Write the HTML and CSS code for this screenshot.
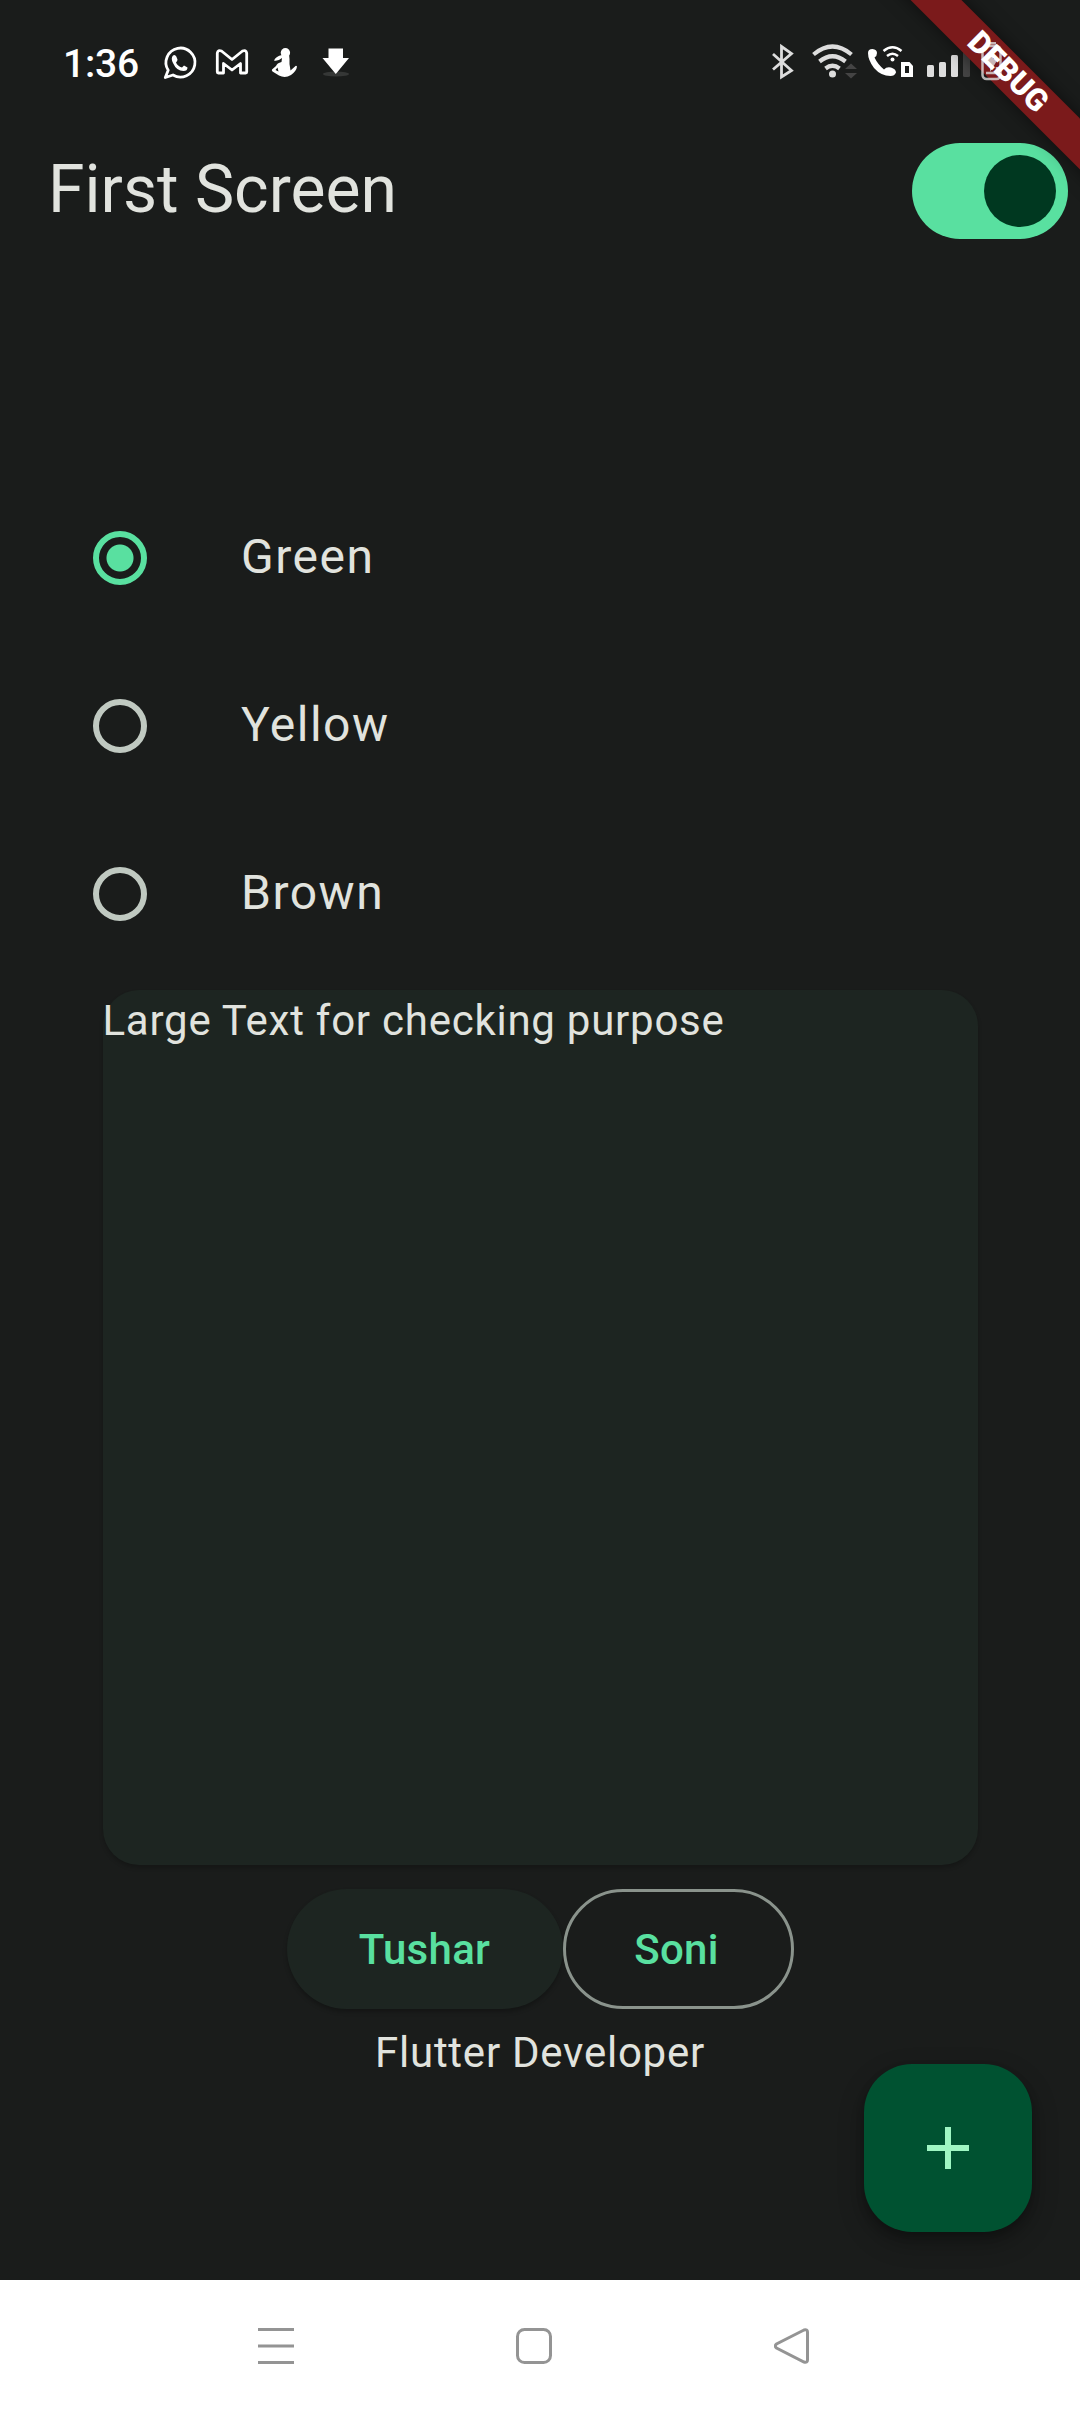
FILE: index.html
```html
<!DOCTYPE html>
<html lang="en">
<head>
<meta charset="utf-8">
<title>First Screen</title>
<link rel="stylesheet" href="styles.css">
</head>
<body>
<div class="screen">
  <header class="status">
    <span class="clock">1:36</span>
    <svg class="status-left" width="190" height="40" viewBox="160 42 190 40">
      <g fill="none" stroke="#fff" stroke-width="2.800" stroke-linejoin="round">
        <path d="M165.300 77.500 168.200 70.300A14.500 14.500 0 1 1 173 75Z"/>
        <path d="M217.300 53V72Q217.300 73 218.300 73H223.500V63.500L232 70 240.500 63.500V73H245.700Q246.700 73 246.700 72V53Q246 49.500 242.500 51L232 59.500 221.500 51Q218 49.500 217.300 53Z"/>
      </g>
      <path fill="#fff" d="M173 55.500Q175 54 176.300 56.500L177.500 59.500Q177.500 61 176 62.500 177.500 66 182 67.500L184 65.500 187.500 67.500Q187.500 71 183.500 71 176.500 71 173 63 170.500 58 173 55.500Z"/>
      <circle cx="285.400" cy="52.800" r="4.700" fill="#fff"/>
      <path fill="#fff" d="M282 55Q276 56 274 60.500 278 61.500 282 58L281.500 62Q277 63 276 66L272 69.500Q271.500 70.500 272.500 71.500L279 75.500Q285 78.500 291 75 296.500 71 297 66.500 296 65 295 66.500L290.500 70.500 289.500 64 289.500 59 289 54ZM277.500 67.500 278.500 71.500 275.500 70Z" fill-rule="evenodd"/>
      <ellipse cx="336" cy="74" rx="13" ry="2.500" fill="#fff" opacity=".12"/>
      <path fill="#fff" d="M328.500 48.500H343V58H349L335.800 74 322.500 58H328.500Z"/>
    </svg>
    <svg class="status-right" width="250" height="50" viewBox="770 35 250 50">
      <path d="M773 54 791.500 70.500 781.500 77V46.500L791.500 53.500 773 69.500" fill="none" stroke="#ddd" stroke-width="2.800"/>
      <g fill="none" stroke="#ddd" stroke-width="4.200"><path d="M813.500 54.500Q832.500 38.500 851.500 54.500M819.500 61.500Q832.500 51 845.500 61.500M825.500 68.500Q832.500 63 839.500 68.500"/></g>
      <circle cx="832.500" cy="74" r="3.500" fill="#ddd"/>
      <path fill="#444" d="M845 69 851 63.500 857 69ZM845 73H857L851 78.500Z"/>
      <path fill="#fff" d="M868 53Q868 49 872.500 49 877 49.500 877 53 877 56 874.500 57.500 877.500 64 884 69.500 886.500 66.500 891 67.500 896 69 896 72.500 894.500 76 890.500 76 881 76 874 68 868 60 868 53Z"/>
      <g fill="none" stroke="#fff" stroke-width="2.500"><path d="M883.500 51Q892.500 43.500 901.500 51M887 56Q892.500 51.500 898 56"/></g>
      <circle cx="892.500" cy="59.500" r="2" fill="#fff"/>
      <path fill="#fff" fill-rule="evenodd" d="M901 62H909.500L913 66V77H901ZM905 66V73H909V66Z"/>
      <rect x="927" y="65" width="7" height="12" rx="1.500" fill="#ddd"/><rect x="939" y="62" width="7" height="15" rx="1.500" fill="#ddd"/><rect x="951" y="55" width="7" height="22" rx="1.500" fill="#ddd"/><rect x="963" y="47" width="7" height="30" rx="1.500" fill="#444"/>
    </svg>
  </header>
  <div class="appbar">
    <h1 class="title">First Screen</h1>
    <div class="switch"><span class="thumb"></span></div>
  </div>
  <main class="content">
    <div class="option"><span class="radio selected"></span><span class="label">Green</span></div>
    <div class="option"><span class="radio"></span><span class="label">Yellow</span></div>
    <div class="option"><span class="radio"></span><span class="label">Brown</span></div>
    <section class="card">Large Text for checking purpose</section>
    <div class="buttons">
      <button class="btn elevated">Tushar</button><button class="btn outlined">Soni</button>
    </div>
    <p class="caption">Flutter Developer</p>
  </main>
  <nav class="navbar">
    <svg class="nav-icon" viewBox="0 0 36 36"><path d="M0 1.500H36M0 18H36M0 34.500H36"/></svg>
    <svg class="nav-icon" viewBox="0 0 36 36"><rect x="1.500" y="1.500" width="33" height="33" rx="7"/></svg>
    <svg class="nav-icon" viewBox="0 0 36 36"><path d="M30 2 2.500 16Q0 18 2.500 20L30 34Q33.500 35 33.500 32V4Q33.500 1 30 2Z"/></svg>
  </nav>
  <button class="fab" aria-label="Add"><svg width="42" height="42" viewBox="0 0 42 42"><path d="M21 0V42M0 21H42"/></svg></button>
  <div class="banner-clip"><div class="banner"></div></div>
  <svg class="battery" width="22" height="40" viewBox="0 0 22 40"><rect x="1.500" y="5" width="18" height="33" rx="4"/><path d="M6 2.300H15M5 32H16V26"/><path class="bolt" d="M12 10 4 23H9V31L17 18H12Z"/></svg>
  <div class="banner-clip"><div class="banner banner-text">DEBUG</div></div>
</div>
</body>
</html>
```
FILE: styles.css
```css
* { box-sizing: border-box; }
body { margin: 0; background: #1a1c1b; font-family: Roboto, sans-serif; color: #e1e3de; }
.screen { position: relative; width: 1080px; height: 2412px; overflow: hidden; display: flex; flex-direction: column; }
svg { display: block; }
.status { height: 107px; display: flex; padding-left: 63px; color: #fff; }
.clock { width: 97px; font-size: 39px; font-weight: 500; line-height: 47px; padding-top: 41px; letter-spacing: -.2px; }
.status-left { margin-top: 42px; }
.status-right { margin: 35px 0 0 420px; }
.appbar { height: 168px; display: flex; align-items: center; justify-content: space-between; padding: 0 12px 0 48px; }
.title { margin: 0; padding-bottom: 2px; font-size: 66px; line-height: 84px; font-weight: 400; }
.switch { width: 156px; height: 96px; padding: 12px; border-radius: 48px; background: #59e0a0; display: flex; justify-content: flex-end; }
.thumb { width: 72px; height: 72px; border-radius: 50%; background: #003820; }
.content { flex: 1; display: flex; flex-direction: column; align-items: center; padding-top: 198.670px; }
.option { width: 1080px; height: 168px; flex: none; display: flex; align-items: center; gap: 94px; padding-left: 93px; }
.radio { width: 54px; height: 54px; border: 6px solid #c0c9c1; border-radius: 50%; }
.selected { border-color: #59e0a0; background: radial-gradient(circle, #59e0a0 13px, transparent 14px); }
.label { padding-bottom: 2px; font-size: 48px; letter-spacing: 1.500px; line-height: 72px; }
.card { width: 875px; height: 875px; flex: none; margin: 12px; padding-top: 1px; border-radius: 36px; background: #1d2521; box-shadow: 0 3px 4px rgba(0, 0, 0, .2); font-size: 42px; line-height: 60px; letter-spacing: .75px; }
.buttons { height: 144px; flex: none; display: flex; align-items: center; }
.btn { height: 120px; padding: 3px 0 0; border: 0; border-radius: 60px; font: 500 42px/60px Roboto, sans-serif; letter-spacing: .3px; color: #59e0a0; }
.elevated { width: 276px; background: #1d2521; box-shadow: 0 3px 4px rgba(0, 0, 0, .25); }
.outlined { width: 231px; background: none; border: 3px solid #8a938c; padding-right: 3px; }
.caption { margin: 0; padding-top: 2px; font-size: 42px; line-height: 60px; letter-spacing: .75px; }
.navbar { height: 132px; background: #fff; display: flex; align-items: center; gap: 222px; padding-left: 258px; }
.nav-icon { width: 36px; height: 36px; fill: none; stroke: #949494; stroke-width: 3; }
.fab { position: absolute; right: 48px; bottom: 180px; width: 168px; height: 168px; padding: 0; border: 0; border-radius: 48px; background: #005231; display: flex; align-items: center; justify-content: center; box-shadow: 0 10px 26px rgba(0, 0, 0, .3), 0 4px 8px rgba(0, 0, 0, .2); }
.fab svg { stroke: #9ff6c3; stroke-width: 6; }
.banner-clip { position: absolute; top: 0; right: 0; width: 240px; height: 240px; overflow: hidden; }
.banner { position: absolute; left: 8px; top: 54px; width: 320px; height: 36px; transform: rotate(45deg); background: #7b1a1b; box-shadow: 0 0 18px rgba(0, 0, 0, .5); }
.banner-text { background: none; box-shadow: none; color: #fff; font-size: 31px; line-height: 36px; font-weight: 900; text-align: center; }
.battery { position: absolute; left: 981px; top: 41px; fill: none; stroke: #ddd; stroke-width: 2.500; opacity: .8; }
.bolt { fill: #ddd; stroke: none; }
```
